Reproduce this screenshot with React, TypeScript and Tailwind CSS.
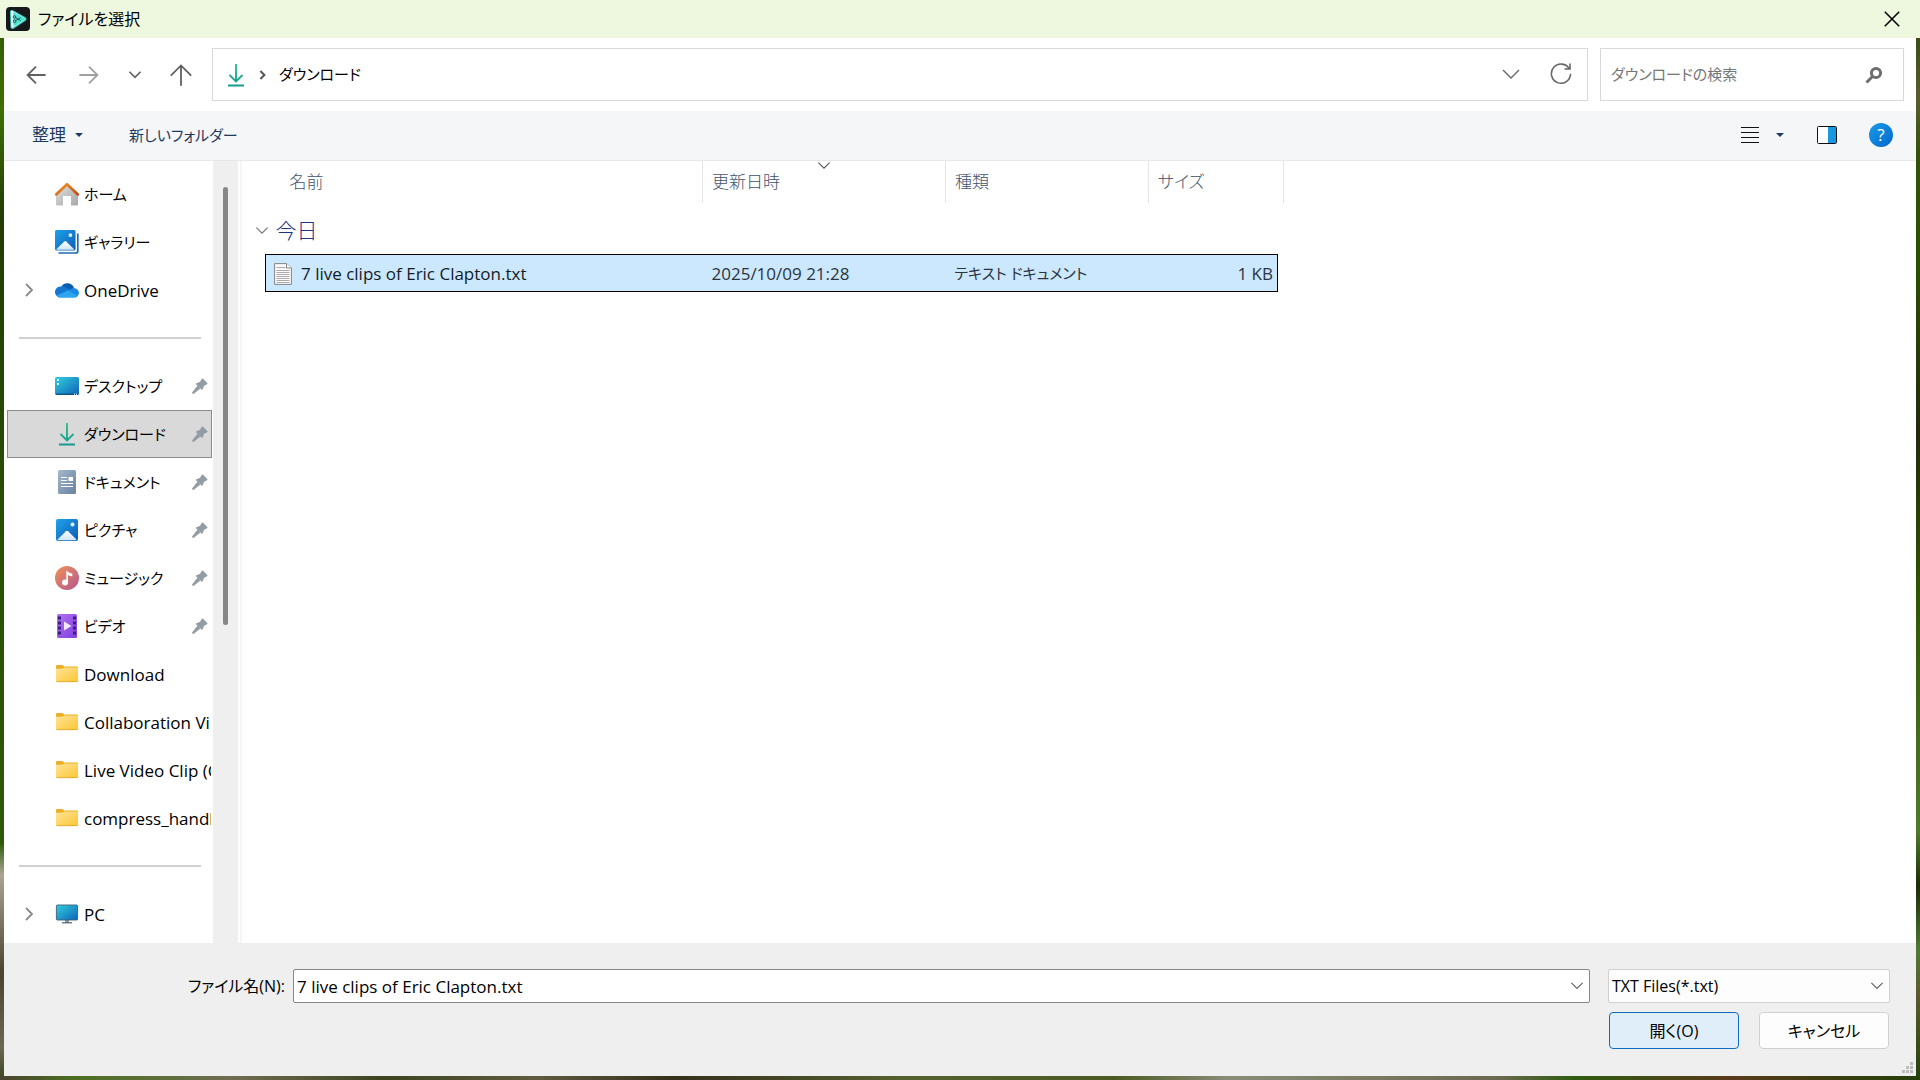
import type { ReactNode } from "react";

const FONT = "font-['Open_Sans','Noto_Sans_CJK_JP',sans-serif]";

// Desktop wallpaper that shows around the dialog: bottom strip, right strip, left strip
const WALLPAPER =
    "bg-[linear-gradient(to_right,#4a4430_0%,#4c7020_4%,#6f6d52_12%,#3d4420_20%,#5f5b40_28%,#34301c_35%,#556030_47%,#4c5a22_58%,#8a8c78_64%,#6b6a50_78%,#2f5c10_82%,#5a3a1c_90%,#24400a_100%),linear-gradient(to_bottom,#24420a_0%,#5a5c30_9%,#33520a_14%,#2a4f00_25%,#23290c_40%,#2f5500_55%,#4f7a2c_77%,#1c2c08_82%,#4f7a35_88%,#5c5a30_92%,#24420a_100%),linear-gradient(to_bottom,#2f5500_0%,#3f7000_10%,#223c05_20%,#2a4f00_50%,#2c5a08_78%,#a9a592_81%,#4a4430_90%,#6b6854_97%,#3d4420_100%)] bg-[length:100%_4px,50%_100%,50%_100%] bg-[position:bottom,right,left] bg-no-repeat";

function Chevron({ className, d = "M3 7l7 7 7-7", width = 1.5 }: { className: string; d?: string; width?: number }) {
    return (
        <svg viewBox="0 0 20 20" className={className} fill="none" stroke="currentColor" strokeWidth={width} aria-hidden="true">
            <path d={d} />
        </svg>
    );
}

function CaretDown() {
    return (
        <svg viewBox="0 0 8 4" className="h-1 w-2" fill="currentColor" aria-hidden="true">
            <path d="M0 0h8L4 4Z" />
        </svg>
    );
}

function AppLogo() {
    return (
        <svg viewBox="0 0 24 24" className="size-6" aria-hidden="true">
            <defs>
                <linearGradient id="logo" x1="0" y1="0" x2="1" y2="1">
                    <stop offset="0" stopColor="#5fdcdc" />
                    <stop offset="1" stopColor="#45e6c0" />
                </linearGradient>
            </defs>
            <rect width="24" height="24" rx="4" fill="#16181b" />
            <path d="M6 5 18.500 12 6.500 20Z" fill="#36d0c0" stroke="#36d0c0" strokeWidth="4" strokeLinejoin="round" />
            <path d="M6 5 18 12 6.500 19.500Z" fill="#e9fbf8" stroke="#e9fbf8" strokeWidth="2.400" strokeLinejoin="round" />
            <path d="M8 6.500 18 12 8.500 18Z" fill="url(#logo)" stroke="url(#logo)" strokeWidth="2" strokeLinejoin="round" />
            <g fill="none" stroke="#14494f" strokeWidth=".9">
                <circle cx="8.500" cy="10" r="1.300" />
                <circle cx="8.500" cy="14.300" r="1.300" />
                <path d="M9.700 10.700 14.500 13.500M9.700 13.600 14.500 10.800" />
            </g>
        </svg>
    );
}

function DownloadIcon() {
    return (
        <svg viewBox="0 0 24 24" className="size-6" fill="none" aria-hidden="true">
            <defs>
                <linearGradient id="dl" gradientUnits="userSpaceOnUse" x1="0" y1="0" x2="0" y2="24">
                    <stop offset="0" stopColor="#34c08c" />
                    <stop offset="1" stopColor="#12998f" />
                </linearGradient>
            </defs>
            <path d="M12 1v17.500M5.500 12l6.500 6.500 6.500-6.500M4 22.500h16" stroke="url(#dl)" strokeWidth="1.900" />
        </svg>
    );
}

function HomeIcon() {
    return (
        <svg viewBox="0 0 24 24" className="size-6" aria-hidden="true">
            <defs>
                <linearGradient id="wall" x1="0" y1="0" x2="1" y2="1">
                    <stop offset="0" stopColor="#dedede" />
                    <stop offset="1" stopColor="#a9a9a9" />
                </linearGradient>
                <linearGradient id="roof" x1="0" y1="0" x2="1" y2="1">
                    <stop offset="0" stopColor="#f09a28" />
                    <stop offset="1" stopColor="#c9490d" />
                </linearGradient>
            </defs>
            <path d="M1 10.500 12 2l11 8.500V22.500q0 1-1 1H16V14H8v9.500H2q-1 0-1-1Z" fill="url(#wall)" />
            <path d="M1.200 12.500 12 2.200 22.800 12.500" fill="none" stroke="url(#roof)" strokeWidth="2.600" strokeLinejoin="round" strokeLinecap="round" />
        </svg>
    );
}

function PictureArt() {
    return (
        <>
            <defs>
                <linearGradient id="pic" x1="0" y1="0" x2="1" y2="1">
                    <stop offset="0" stopColor="#1fa2ea" />
                    <stop offset="1" stopColor="#0c5cb3" />
                </linearGradient>
                <linearGradient id="hill" x1="0" y1="0" x2="0" y2="1">
                    <stop offset="0" stopColor="#ffffff" />
                    <stop offset="1" stopColor="#cfe6fa" />
                </linearGradient>
            </defs>
            <rect x="1" y="1" width="22" height="22" rx="2" fill="url(#pic)" />
            <path d="M2.500 21.500 11 13.200q1-.9 2 0l8.500 8.300q-.5.700-1.500.7H4q-1 0-1.500-.7Z" fill="url(#hill)" />
            <circle cx="17.500" cy="6.500" r="2" fill="#e8f5ff" />
        </>
    );
}

function GalleryIcon() {
    return (
        <svg viewBox="0 0 24 24" className="size-6" aria-hidden="true">
            <path d="M22.800 3.500V21q0 2-2 2H3.500" fill="none" stroke="#1b6bb5" strokeWidth="1.700" />
            <svg x="-1" y="-1" width="22.500" height="22.500" viewBox="0 0 24 24">
                <PictureArt />
            </svg>
        </svg>
    );
}

function PicturesIcon() {
    return (
        <svg viewBox="0 0 24 24" className="size-6" aria-hidden="true">
            <PictureArt />
        </svg>
    );
}

function OneDriveIcon() {
    return (
        <svg viewBox="0 0 24 24" className="size-6" aria-hidden="true">
            <path d="M6.500 8.500A7 7 0 0 1 19 10l-6 5Z" fill="#0a5cb0" />
            <path d="M6 8.500q2.500-.6 5 1L17 13 5 19.500A5.500 5.500 0 0 1 6 8.500Z" fill="#1377d0" />
            <path d="M13 12.500 18 10q5 0 6 4.500-.2 3.500-3.500 5Z" fill="#1a8be0" />
            <path d="M1.500 17.500 13 12.500l9.800 5.500q-1.300 1.700-3.800 1.700H5.500q-2.500 0-4-2.200Z" fill="#2ba6ee" />
        </svg>
    );
}

function DesktopIcon() {
    return (
        <svg viewBox="0 0 24 24" className="size-6" aria-hidden="true">
            <defs>
                <linearGradient id="desk" x1="0" y1="0" x2="1" y2="1">
                    <stop offset="0" stopColor="#31cfdc" />
                    <stop offset="1" stopColor="#0e63b8" />
                </linearGradient>
            </defs>
            <rect y="3" width="24" height="18" rx="1.500" fill="url(#desk)" />
            <path d="M2 5h2v2H2zM2 9h2v2H2z" fill="#d9fbff" />
            <path d="M1 20.200h22" stroke="#0b4d78" strokeWidth="1.200" />
            <path d="M19 20.200h1M21 20.200h1" stroke="#fff" strokeWidth="1.200" />
        </svg>
    );
}

function DocumentsIcon() {
    return (
        <svg viewBox="0 0 24 24" className="size-6" aria-hidden="true">
            <defs>
                <linearGradient id="docs" x1="0" y1="0" x2="1" y2="1">
                    <stop offset="0" stopColor="#a3b8cd" />
                    <stop offset="1" stopColor="#68829f" />
                </linearGradient>
            </defs>
            <rect x="3" width="18" height="24" rx="1.500" fill="url(#docs)" />
            <path d="M6 7.500h6M6 10.500h6M6 13.500h12M6 16.500h12" stroke="#fff" strokeWidth="1.200" />
            <path d="M13.500 7h4.500v4h-4.500z" fill="#fff" />
        </svg>
    );
}

function MusicIcon() {
    return (
        <svg viewBox="0 0 24 24" className="size-6" aria-hidden="true">
            <defs>
                <linearGradient id="music" x1="0" y1="0" x2="1" y2="1">
                    <stop offset="0" stopColor="#f0915a" />
                    <stop offset="1" stopColor="#b3578f" />
                </linearGradient>
            </defs>
            <circle cx="12" cy="12" r="12" fill="url(#music)" />
            <circle cx="10" cy="16.500" r="3" fill="#fff" />
            <path d="M11.300 4.500q2.500 2.500 6 3v2.700q-2.500 0-4.300-1.300v7.600h-1.700Z" fill="#fff" />
        </svg>
    );
}

function VideosIcon() {
    return (
        <svg viewBox="0 0 24 24" className="size-6" aria-hidden="true">
            <defs>
                <linearGradient id="video" x1="0" y1="0" x2="1" y2="1">
                    <stop offset="0" stopColor="#b372f2" />
                    <stop offset="1" stopColor="#7d3fdd" />
                </linearGradient>
            </defs>
            <rect x="2" width="20" height="24" rx="1.500" fill="url(#video)" />
            <path d="M4.500 2.500v20M19.500 2.500v20" stroke="#3b1c85" strokeWidth="3" strokeDasharray="3 2" />
            <path d="M9 7.500v9l7.500-4.500Z" fill="#f3e9ff" />
        </svg>
    );
}

function FolderIcon() {
    return (
        <svg viewBox="0 0 24 24" className="size-6" aria-hidden="true">
            <defs>
                <linearGradient id="folder" x1="0" y1="0" x2="1" y2="1">
                    <stop offset="0" stopColor="#ffe49b" />
                    <stop offset="1" stopColor="#fcc62f" />
                </linearGradient>
            </defs>
            <path d="M1 4q0-1 1-1h5.500L9 4.500h13q1 0 1 1V12H1Z" fill="#e9b12c" />
            <path d="M1 6.700h6.500L9.500 5.500H23V19q0 1-1 1H2q-1 0-1-1Z" fill="url(#folder)" />
            <path d="M1.500 19.700h21" stroke="#dba52b" strokeWidth=".8" />
        </svg>
    );
}

function PcIcon() {
    return (
        <svg viewBox="0 0 24 24" className="size-6" aria-hidden="true">
            <path d="M10 18h4v3h-4z" fill="#8b9aa5" />
            <path d="M7 20.800h10" stroke="#4c6475" strokeWidth="1.200" />
            <rect x="1.400" y="3" width="21.200" height="15" rx="1" fill="url(#desk)" stroke="#3c6076" strokeWidth=".9" />
        </svg>
    );
}

function PinIcon() {
    return (
        <svg viewBox="0 0 16 16" className="size-4" fill="#929ca5" aria-hidden="true">
            <path d="M9.700.8q.7-.7 1.400 0l4.200 4.100q.7.800-.2 1.300l-3 1.500-1.500 3.700q-.4.900-1.100.2L4.200 6.500q-.8-.8.200-1.200l3.700-1.500Z" />
            <path d="m5.600 7.600 2.800 2.800L1.900 15.800H.3v-1.600Z" />
        </svg>
    );
}

function TextFileIcon() {
    return (
        <svg viewBox="0 0 18 24" className="h-6 w-[18px]" aria-hidden="true">
            <path d="M.6 1.600h12L17.400 6v16.400H.6Z" fill="#fafafa" stroke="#858585" strokeWidth="1" />
            <path d="M12.500 1.600V6h4.900" fill="#fff" stroke="#858585" strokeWidth="1" />
            <path d="M2.500 5.500h9M2.500 8.500h13M2.500 10.500h13M2.500 12.500h13M2.500 14.500h13M2.500 16.500h13M2.500 18.500h13M2.500 20.500h13" stroke="#a2a2a2" strokeWidth=".9" />
        </svg>
    );
}

type Place = { label: string; icon: ReactNode; pinned?: boolean; expandable?: boolean; selected?: boolean };

const places: Place[][] = [
    [
        { label: "ホーム", icon: <HomeIcon /> },
        { label: "ギャラリー", icon: <GalleryIcon /> },
        { label: "OneDrive", icon: <OneDriveIcon />, expandable: true },
    ],
    [
        { label: "デスクトップ", icon: <DesktopIcon />, pinned: true },
        { label: "ダウンロード", icon: <DownloadIcon />, pinned: true, selected: true },
        { label: "ドキュメント", icon: <DocumentsIcon />, pinned: true },
        { label: "ピクチャ", icon: <PicturesIcon />, pinned: true },
        { label: "ミュージック", icon: <MusicIcon />, pinned: true },
        { label: "ビデオ", icon: <VideosIcon />, pinned: true },
        { label: "Download", icon: <FolderIcon /> },
        { label: "Collaboration Vi", icon: <FolderIcon /> },
        { label: "Live Video Clip (C", icon: <FolderIcon /> },
        { label: "compress_handb", icon: <FolderIcon /> },
    ],
    [{ label: "PC", icon: <PcIcon />, expandable: true }],
];

function PlaceRow({ place }: { place: Place }) {
    const latin = /^[ -~]+$/.test(place.label);
    return (
        <li>
            <a
                href="#"
                className={`mr-px flex h-12 items-center border pl-[11px] ${place.selected ? "border-[#8c8c8c] bg-[#d9d9d9]" : "border-transparent"}`}
            >
                <span className="w-9 shrink-0 text-[#8a8a8a]">
                    {place.expandable && <Chevron className="size-5" d="M7 4l6 6-6 6" width={1.8} />}
                </span>
                <span className="shrink-0">{place.icon}</span>
                <span className={`ml-[5px] flex-1 overflow-hidden whitespace-nowrap ${latin ? "pt-0.5 text-[17px]" : "text-[15px]"}`}>
                    {place.label}
                </span>
                {place.pinned && (
                    <span className="mr-[3px] shrink-0">
                        <PinIcon />
                    </span>
                )}
            </a>
        </li>
    );
}

function Sidebar() {
    return (
        <nav aria-label="場所" className="w-[209px] shrink-0 pt-[9px] pb-[5px] pl-[3px]">
            {places.map((group, i) => (
                <div key={i}>
                    {i > 0 && (
                        <div className="flex h-12 items-center px-3">
                            <hr className="w-full border-t-2 border-[#d0d0d0]" />
                        </div>
                    )}
                    <ul>
                        {group.map((place) => (
                            <PlaceRow key={place.label} place={place} />
                        ))}
                    </ul>
                </div>
            ))}
        </nav>
    );
}

function FileList() {
    return (
        <main className="flex-1 overflow-hidden pl-[23px]">
            <table className="w-[1018px] table-fixed border-collapse text-left">
                <colgroup>
                    <col className="w-[437px]" />
                    <col className="w-[243px]" />
                    <col className="w-[203px]" />
                    <col className="w-[129px]" />
                    <col className="w-[6px]" />
                </colgroup>
                <thead>
                    <tr className="h-[42px] text-[17px] text-[#3f5470]">
                        <th className="border-r border-[#e5e5e5] pl-6 font-light">名前</th>
                        <th className="relative border-r border-[#e5e5e5] pl-[9px] font-light">
                            更新日時
                            <Chevron className="absolute inset-x-0 -top-1 mx-auto size-4 text-[#555]" width={1.4} />
                        </th>
                        <th className="border-r border-[#e5e5e5] pl-[9px] font-light">種類</th>
                        <th className="pl-[9px] font-light">サイズ</th>
                        <th className="border-r border-[#e5e5e5]" />
                    </tr>
                </thead>
                <tbody>
                    <tr className="h-[51px]">
                        <td colSpan={5} className="pt-1">
                            <button type="button" className="-ml-3 flex items-center gap-[6px] text-[21px] font-light text-[#1e3287]">
                                <Chevron className="size-4 text-[#777]" />
                                今日
                            </button>
                        </td>
                    </tr>
                    <tr className="h-[37px] text-[17px] text-[#2b3440]">
                        <td className="border-y border-l border-black bg-[#cce8ff] pt-0.5 pl-2 text-[#111c26]">
                            <span className="flex items-center gap-[9px]">
                                <TextFileIcon />7 live clips of Eric Clapton.txt
                            </span>
                        </td>
                        <td className="border-y border-black bg-[#cce8ff] pt-0.5 pl-[9px]">2025/10/09 21:28</td>
                        <td className="border-y border-black bg-[#cce8ff] pt-0.5 pl-[9px] text-[15px]">テキスト ドキュメント</td>
                        <td className="border-y border-r border-black bg-[#cce8ff] pt-0.5 pr-1 text-right">1 KB</td>
                        <td />
                    </tr>
                </tbody>
            </table>
        </main>
    );
}

export default function App() {
    return (
        <div className={`flex min-h-screen flex-col text-black ${WALLPAPER} ${FONT} [font-feature-settings:'palt']`}>
            <header className="flex h-[38px] items-center bg-[#eef8de] pr-4 pl-[6px]">
                <AppLogo />
                <h1 className="ml-2 flex-1 text-base">ファイルを選択</h1>
                <button type="button" aria-label="閉じる">
                    <Chevron className="size-6" d="M4 4l12 12M16 4L4 16" width={1.3} />
                </button>
            </header>

            <div className="mx-1 mb-1 flex flex-1 flex-col bg-white">
                <div className="flex h-[73px] items-center pr-3">
                    <div className="flex w-[208px] shrink-0 items-center gap-[26px] pl-5 text-[#606060]">
                        <button type="button" aria-label="戻る">
                            <Chevron className="size-6" d="M18 10H3M10 3L3 10l7 7" />
                        </button>
                        <button type="button" aria-label="進む" className="ml-[3px] text-[#a0a0a0]">
                            <Chevron className="size-6" d="M2 10h15M10 3l7 7-7 7" />
                        </button>
                        <button type="button" aria-label="最近の場所">
                            <Chevron className="size-4" d="M3 6l7 7 7-7" width={2} />
                        </button>
                        <button type="button" aria-label="上へ">
                            <Chevron className="size-6" d="M10 19V2M1.500 10.500l8.500-8.500 8.500 8.500" />
                        </button>
                    </div>
                    <div className="flex h-[53px] flex-1 items-center border border-[#d9d9d9] pr-[14px] pl-[11px]">
                        <DownloadIcon />
                        <Chevron className="ml-[6px] size-4 text-[#555]" d="M8 5l5 5-5 5" width={2.5} />
                        <span className="ml-[9px] flex-1 text-[15px]">ダウンロード</span>
                        <button type="button" aria-label="履歴" className="mr-7 text-[#666]">
                            <Chevron className="size-5" d="M2 5l8 8 8-8" width={1.4} />
                        </button>
                        <button type="button" aria-label="更新" className="text-[#666]">
                            <Chevron className="size-6" d="M17 5A8 8 0 1 0 18 9M17.500 .5V5H13" width={1.3} />
                        </button>
                    </div>
                    <div className="ml-3 flex h-[53px] w-[304px] items-center border border-[#d9d9d9] pr-5 pl-[10px]">
                        <input
                            type="search"
                            aria-label="ダウンロードの検索"
                            placeholder="ダウンロードの検索"
                            className="min-w-0 flex-1 text-[15px] outline-none placeholder:text-[#767676]"
                        />
                        <svg viewBox="0 0 18 18" className="size-[18px]" fill="none" stroke="#6e6e6e" aria-hidden="true">
                            <circle cx="11" cy="7" r="4.600" strokeWidth="3" />
                            <path d="M7.500 10.500 1.500 16.500" strokeWidth="3" />
                        </svg>
                    </div>
                </div>

                <div className="flex h-[50px] items-center border-b border-[#e5e7e9] bg-[#f4f6f8] pr-[23px] pb-px pl-7 text-[#1f3a5f]">
                    <button type="button" className="flex items-center gap-[9px] text-[17px]">
                        整理
                        <CaretDown />
                    </button>
                    <button type="button" className="ml-[46px] text-[15px]">新しいフォルダー</button>
                    <button type="button" aria-label="表示方法の変更" className="ml-auto flex items-center gap-4">
                        <svg viewBox="0 0 20 20" className="size-5" stroke="#111" aria-hidden="true">
                            <path d="M1 2.500h18M1 7.500h18M1 12.500h18M1 17.500h18" />
                        </svg>
                        <CaretDown />
                    </button>
                    <button type="button" aria-label="プレビュー ウィンドウ" className="ml-[33px]">
                        <svg viewBox="0 0 20 18" className="h-[18px] w-5" aria-hidden="true">
                            <rect x=".5" y=".5" width="19" height="17" rx="1" fill="#fff" stroke="#111" />
                            <path d="M11 1h8v16h-8z" fill="#1b96e0" />
                        </svg>
                    </button>
                    <button type="button" aria-label="ヘルプ" className="ml-8 flex size-6 items-center justify-center rounded-full bg-linear-to-br from-[#1a9ae8] to-[#0868cc] text-[17px] text-white">
                        ?
                    </button>
                </div>

                <div className="flex flex-1">
                    <Sidebar />
                    <div className="flex w-[25px] shrink-0 justify-center bg-[#efefef] pt-[26px]">
                        <div className="h-[438px] w-[5px] rounded-full bg-[#868686]" />
                    </div>
                    <div className="w-1 shrink-0 border-r-2 border-[#f5f5f5]" />
                    <FileList />
                </div>

                <form className="relative flex gap-[18px] bg-[#efefef] pt-[26px] pr-[26px] pb-[27px] text-base">
                    <div className="flex h-[34px] flex-1 items-center">
                        <label htmlFor="filename" className="w-[289px] shrink-0 pr-2 text-right">
                            ファイル名(N):
                        </label>
                        <div className="flex h-full flex-1 items-center rounded-xs border border-[#868686] bg-white pr-1 pl-[3px]">
                            <input id="filename" defaultValue="7 live clips of Eric Clapton.txt" className="min-w-0 flex-1 pt-0.5 text-[17px] outline-none" />
                            <button type="button" aria-label="ファイル名の履歴" className="text-[#666]">
                                <Chevron className="size-4" d="M3 6l7 7 7-7" />
                            </button>
                        </div>
                    </div>
                    <div className="flex w-[282px] shrink-0 flex-col gap-[9px]">
                        <div className="relative">
                            <select aria-label="ファイルの種類" className="block h-[34px] w-full appearance-none rounded-xs border border-[#d0d0d0] bg-[#fdfdfd] px-[3px]">
                                <option>TXT Files(*.txt)</option>
                            </select>
                            <Chevron className="pointer-events-none absolute top-[9px] right-[5px] size-4 text-[#666]" d="M3 6l7 7 7-7" />
                        </div>
                        <div className="flex justify-between px-px">
                            <button type="button" className="h-[37px] w-[130px] rounded border border-[#0f6cbd] bg-[#e0eef9]">
                                開く(O)
                            </button>
                            <button type="button" className="h-[37px] w-[130px] rounded border border-[#d0d0d0] bg-[#fdfdfd]">
                                キャンセル
                            </button>
                        </div>
                    </div>
                    <svg viewBox="0 0 12 12" className="absolute right-[2px] bottom-[2px] size-3" fill="#bdbdbd" aria-hidden="true">
                        <path d="M8 0h3v3H8zM4 4h3v3H4zM8 4h3v3H8zM0 8h3v3H0zM4 8h3v3H4zM8 8h3v3H8z" />
                    </svg>
                </form>
            </div>
        </div>
    );
}
